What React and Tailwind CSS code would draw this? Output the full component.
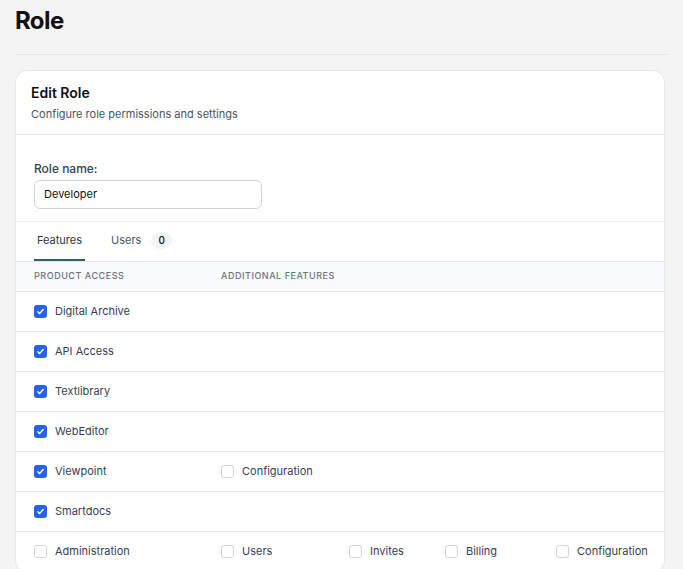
import React from 'react';

const rows = [
  { name: 'Digital Archive', on: true, extra: [] },
  { name: 'API Access', on: true, extra: [] },
  { name: 'Textlibrary', on: true, extra: [] },
  { name: 'WebEditor', on: true, extra: [] },
  { name: 'Viewpoint', on: true, extra: ['Configuration'] },
  { name: 'Smartdocs', on: true, extra: [] },
  { name: 'Administration', on: false, extra: ['Users', 'Invites', 'Billing', 'Configuration'] },
];

function Box({ on }) {
  return on ? (
    <span className="w-[13px] h-[13px] rounded-[3px] bg-[#2563eb] flex items-center justify-center shrink-0">
      <svg width="9" height="9" viewBox="0 0 10 10"><path d="M2 5.2l2 2 4-4.4" fill="none" stroke="white" strokeWidth="1.6" strokeLinecap="round" strokeLinejoin="round" /></svg>
    </span>
  ) : (
    <span className="w-[13px] h-[13px] rounded-[3px] border border-[#d1d5db] bg-white shrink-0" />
  );
}

function Item({ label, on }) {
  return (
    <div className="flex items-center gap-2">
      <Box on={on} />
      <span>{label}</span>
    </div>
  );
}

export default function App() {
  return (
    <div className="min-h-screen bg-[#f4f4f5] px-[15px] text-[#1f2937]" style={{ fontFamily: 'Inter, "Noto Sans", sans-serif' }}>
      <h1 className="text-[24px] font-bold pt-[6px] h-[54px] leading-[30px] text-[#111] tracking-tight">Role</h1>
      <div className="border-t border-[#e5e7eb] h-[16px]" />
      <div className="w-[650px] bg-white border border-[#e5e7eb] rounded-xl overflow-hidden">
        <div className="px-[15px] pt-[12px] pb-[11px] border-b border-[#e5e7eb]">
          <div className="text-[14px] font-semibold text-[#111] leading-5">Edit Role</div>
          <div className="text-[11px] text-[#4b5563] mt-[3px]">Configure role permissions and settings</div>
        </div>
        <div className="px-[18px] pt-[25px] pb-[12px] border-b border-[#f0f0f0]">
          <div className="text-[12px] font-medium text-[#374151] mb-[2px]">Role name:</div>
          <div className="w-[228px] h-[29px] border border-[#d1d5db] rounded-md flex items-center px-[9px] text-[11px] text-[#111]">Developer</div>
        </div>
        <div className="flex items-end h-[40px] px-[18px] gap-[26px] text-[11px] border-b border-[#e5e7eb]">
          <div className="h-full flex items-center px-[3px] border-b-2 border-[#2f5f6f] text-[#1e3a4a]">Features</div>
          <div className="h-full flex items-center gap-[10px] text-[#4b5563] pb-[2px]">
            Users <span className="bg-[#f3f4f6] rounded-full px-[7px] py-[1px] text-[10px] font-medium text-[#111]">0</span>
          </div>
        </div>
        <div className="grid grid-cols-[187px_128px_96px_111px_1fr] pl-[18px] h-[30px] items-center bg-[#f9fafb] border-b border-[#e5e7eb] text-[9px] tracking-[0.06em] text-[#6b7280] font-medium">
          <div>PRODUCT ACCESS</div>
          <div className="col-span-4">ADDITIONAL FEATURES</div>
        </div>
        {rows.map((r) => (
          <div key={r.name} className="grid grid-cols-[187px_128px_96px_111px_1fr] pl-[18px] h-[40px] items-center border-b border-[#e5e7eb] text-[11px] text-[#374151]">
            <Item label={r.name} on={r.on} />
            {r.extra.map((e, i) => <Item key={i} label={e} on={false} />)}
          </div>
        ))}
      </div>
    </div>
  );
}
